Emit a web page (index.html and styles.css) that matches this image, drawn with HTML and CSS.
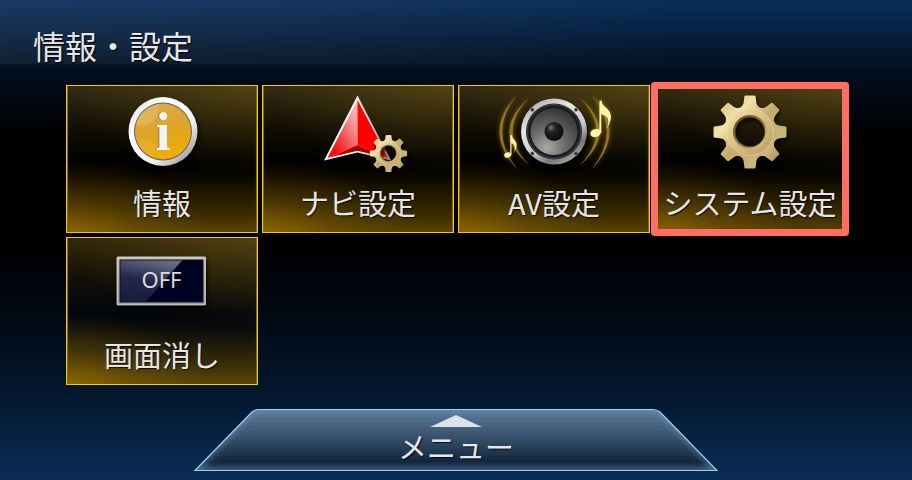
FILE: index.html
```html
<!DOCTYPE html>
<html lang="ja">
<head>
<meta charset="utf-8">
<meta name="viewport" content="width=device-width, initial-scale=1">
<title>情報・設定</title>
<link rel="stylesheet" href="styles.css">
</head>
<body>
<svg class="defs" width="0" height="0" aria-hidden="true">
  <defs>
    <linearGradient id="gold" x1="0" y1="0" x2="1" y2="1">
      <stop offset="0" stop-color="#c9b275"/>
      <stop offset=".3" stop-color="#f3e2a8"/>
      <stop offset=".5" stop-color="#c4aa69"/>
      <stop offset=".75" stop-color="#cdb67c"/>
      <stop offset="1" stop-color="#80683a"/>
    </linearGradient>
    <linearGradient id="face" x1="0" y1="0" x2="1" y2="1">
      <stop offset="0" stop-color="#f3e4ae"/>
      <stop offset=".5" stop-color="#d6c085"/>
      <stop offset="1" stop-color="#b39c60"/>
    </linearGradient>
    <linearGradient id="rim" x1="0" y1="0" x2="1" y2="1">
      <stop offset="0" stop-color="#5b4012"/>
      <stop offset=".5" stop-color="#9a7a38"/>
      <stop offset="1" stop-color="#f3dfa2"/>
    </linearGradient>
    <path id="tooth" d="M-9-22V-25Q-6.800-26.500-6.400-29L-5.600-35.500Q-5.400-36.500-4.500-36.500H4.500Q5.400-36.500 5.600-35.500L6.400-29Q6.800-26.500 9-25V-22Z"/>
    <mask id="gear-shape" maskUnits="userSpaceOnUse" x="-38" y="-38" width="76" height="76">
      <g fill="#fff">
        <circle r="26.500"/>
        <use href="#tooth"/>
        <use href="#tooth" transform="rotate(45)"/>
        <use href="#tooth" transform="rotate(90)"/>
        <use href="#tooth" transform="rotate(135)"/>
        <use href="#tooth" transform="rotate(180)"/>
        <use href="#tooth" transform="rotate(225)"/>
        <use href="#tooth" transform="rotate(270)"/>
        <use href="#tooth" transform="rotate(315)"/>
      </g>
      <circle r="14.500" fill="#000"/>
    </mask>
    <g id="gear">
      <g mask="url(#gear-shape)">
        <rect x="-38" y="-38" width="76" height="76" fill="url(#gold)"/>
        <circle r="23.500" fill="url(#face)"/>
        <circle r="23.500" fill="none" stroke="#f7e9b6" stroke-opacity=".5" stroke-width=".8"/>
        <circle r="17" fill="url(#rim)"/>
        <circle r="15" fill="none" stroke="#6e4d18" stroke-width="1"/>
      </g>
    </g>
  </defs>
</svg>

<header class="header">
  <h1 class="title">情報・設定</h1>
</header>

<main class="tiles">
  <button class="tile" type="button">
    <svg class="icon" viewBox="0 0 120 88" aria-hidden="true">
      <defs>
        <linearGradient id="bezel" x1="0" y1="0" x2="1" y2="1">
          <stop offset="0" stop-color="#d8d8dc"/>
          <stop offset=".3" stop-color="#fff"/>
          <stop offset=".65" stop-color="#f2f2f4"/>
          <stop offset=".85" stop-color="#a9a9b0"/>
          <stop offset="1" stop-color="#ddd"/>
        </linearGradient>
        <linearGradient id="amber" x1=".2" y1="0" x2=".5" y2="1">
          <stop offset="0" stop-color="#d9ac4c"/>
          <stop offset=".55" stop-color="#e0a325"/>
          <stop offset="1" stop-color="#f1ae08"/>
        </linearGradient>
        <clipPath id="disc"><circle cx="61" cy="43.500" r="28"/></clipPath>
      </defs>
      <circle class="shadow" cx="61" cy="43.500" r="34.500" fill="url(#bezel)"/>
      <circle cx="61" cy="43.500" r="29" fill="#66645f"/>
      <circle cx="61" cy="43.500" r="28" fill="url(#amber)"/>
      <path clip-path="url(#disc)" d="M30 35Q41 41 50 34Q57 28 57 12L30 12Z" fill="#fff" fill-opacity=".13"/>
      <path clip-path="url(#disc)" d="M30 50Q48 48 54 58L50 75H30Z" fill="#fff" fill-opacity=".08"/>
      <text class="info-letter info-shade" x="60" y="62">i</text>
      <text class="info-letter" x="61" y="62">i</text>
    </svg>
    <span class="label">情報</span>
  </button>

  <button class="tile" type="button">
    <svg class="icon" viewBox="0 0 120 88" aria-hidden="true">
      <defs>
        <linearGradient id="left-face" x1="1" y1=".25" x2=".35" y2="1">
          <stop offset="0" stop-color="#ffb5b5"/>
          <stop offset=".4" stop-color="#f57678"/>
          <stop offset="1" stop-color="#f00c0c"/>
        </linearGradient>
        <linearGradient id="base-face" x1="0" y1="0" x2="1" y2="0">
          <stop offset="0" stop-color="#f00"/>
          <stop offset=".5" stop-color="#a50000"/>
          <stop offset="1" stop-color="#d00000"/>
        </linearGradient>
        <linearGradient id="arrow-edge" x1="0" y1="0" x2="1" y2="0">
          <stop offset="0" stop-color="#fff"/>
          <stop offset=".5" stop-color="#f4f4f4"/>
          <stop offset="1" stop-color="#8a9297"/>
        </linearGradient>
      </defs>
      <path d="M59.500 7.500L26 72.500L59.500 64.500L93 72.500Z" fill="url(#arrow-edge)"/>
      <path d="M59.500 12L29.500 70L59.500 57Z" fill="url(#left-face)"/>
      <path d="M59.500 12V57L90 70Z" fill="#f00"/>
      <path d="M29.500 70L59.500 57L90 70L59.500 62.800Z" fill="url(#base-face)"/>
      <g class="shadow"><use href="#gear" transform="translate(90.500 65.500) scale(.51)"/></g>
    </svg>
    <span class="label">ナビ設定</span>
  </button>

  <button class="tile" type="button">
    <svg class="icon" viewBox="0 0 120 88" aria-hidden="true">
      <defs>
        <linearGradient id="steel" x1=".2" y1="0" x2=".8" y2="1">
          <stop offset="0" stop-color="#aaa"/>
          <stop offset=".3" stop-color="#e6e6e6"/>
          <stop offset=".6" stop-color="#c9c9ce"/>
          <stop offset=".8" stop-color="#777"/>
          <stop offset="1" stop-color="#bbb"/>
        </linearGradient>
        <radialGradient id="cone" cx=".35" cy=".85" r=".9">
          <stop offset="0" stop-color="#aaaaa4"/>
          <stop offset=".4" stop-color="#6f706d"/>
          <stop offset="1" stop-color="#303030"/>
        </radialGradient>
        <radialGradient id="cap" cx=".35" cy=".3" r=".75">
          <stop offset="0" stop-color="#777"/>
          <stop offset=".3" stop-color="#222"/>
          <stop offset="1" stop-color="#080808"/>
        </radialGradient>
        <g id="waves">
          <path d="M23.500 6.500Q-12.500 43.500 23.500 81.500Q-7 43.500 23.500 6.500Z"/>
          <path d="M35.500 9.500Q-4.500 43.500 35.500 77.500Q2 43.500 35.500 9.500Z"/>
        </g>
      </defs>
      <g class="glow" fill="#967423">
        <use href="#waves"/>
        <use href="#waves" transform="translate(121 0) scale(-1 1)"/>
      </g>
      <circle class="shadow" cx="60" cy="43.500" r="33" fill="url(#steel)"/>
      <circle cx="60" cy="43.500" r="28" fill="#202124"/>
      <circle cx="60" cy="43.500" r="27" fill="none" stroke="#44454a" stroke-width="1"/>
      <circle cx="60" cy="43.500" r="24" fill="url(#cone)"/>
      <circle cx="60" cy="43.500" r="24" fill="none" stroke="#151515" stroke-width="1"/>
      <circle cx="60" cy="43.500" r="9.500" fill="url(#cap)"/>
      <g fill="#222" stroke="#888" stroke-width=".6">
        <circle cx="38.300" cy="21.700" r="1.700"/><circle cx="82" cy="21.700" r="1.700"/>
        <circle cx="38.300" cy="65.500" r="1.700"/><circle cx="82" cy="65.500" r="1.700"/>
      </g>
      <g class="glow" fill="#fff6ae">
        <ellipse cx="101.500" cy="45" rx="5.200" ry="4" transform="rotate(-15 101.500 45)"/>
        <path d="M105.500 12.500H107.500Q108 17 113 20.500Q121 28 112.500 41Q118 29 107.300 26V45H105.300Z"/>
        <ellipse cx="13.700" cy="67" rx="3.500" ry="2.600" transform="rotate(-15 13.700 67)"/>
        <path d="M16.300 47H17.500Q18 50 20.500 52Q25 57 19.800 64.500Q23 57 17.500 55V67H16.300Z"/>
      </g>
    </svg>
    <span class="label">AV設定</span>
  </button>

  <button class="tile tile-selected" type="button">
    <svg class="icon" viewBox="0 0 120 88" aria-hidden="true">
      <g class="shadow"><use href="#gear" transform="translate(60 44)"/></g>
    </svg>
    <span class="label">システム設定</span>
  </button>

  <button class="tile" type="button">
    <svg class="icon" viewBox="0 0 120 88" aria-hidden="true">
      <defs>
        <linearGradient id="frame" x1="0" y1="0" x2="0" y2="1">
          <stop offset="0" stop-color="#c4c2bc"/>
          <stop offset=".5" stop-color="#aeaca8"/>
          <stop offset="1" stop-color="#a3a19c"/>
        </linearGradient>
        <linearGradient id="glass" x1=".6" y1="0" x2=".3" y2="1">
          <stop offset="0" stop-color="#777b92"/>
          <stop offset=".5" stop-color="#2a2e50"/>
          <stop offset="1" stop-color="#1c2042"/>
        </linearGradient>
      </defs>
      <rect class="shadow" x="14.500" y="16.500" width="89.500" height="49" rx="1.500" fill="url(#frame)"/>
      <rect x="15.500" y="17.500" width="87.500" height="47" fill="none" stroke="#dedcd6" stroke-opacity=".5"/>
      <rect x="17.500" y="19.500" width="84" height="43" fill="#11131f"/>
      <rect x="18.500" y="20.500" width="82" height="41" fill="#000222"/>
      <path d="M18.500 20.500H80L44 61.500H18.500Z" fill="url(#glass)" fill-opacity=".85"/>
      <text class="off-letters" x="59.500" y="48">OFF</text>
    </svg>
    <span class="label">画面消し</span>
  </button>
</main>

<footer class="footer">
  <button class="menu" type="button">
    <svg class="menu-shape" viewBox="0 0 524 64" preserveAspectRatio="none" aria-hidden="true">
      <defs>
        <linearGradient id="menu-fill" x1="0" y1="0" x2="0" y2="1">
          <stop offset="0" stop-color="#5c7b9b"/>
          <stop offset=".45" stop-color="#38526d"/>
          <stop offset=".85" stop-color="#11263d"/>
          <stop offset="1" stop-color="#1d3853"/>
        </linearGradient>
        <clipPath id="menu-clip"><path d="M1 62.500L58 4Q61 1.500 65 1.500H459Q463 1.500 466 4L523 62.500Z"/></clipPath>
      </defs>
      <path d="M1 62.500L58 4Q61 1.500 65 1.500H459Q463 1.500 466 4L523 62.500Z" fill="url(#menu-fill)"/>
      <g clip-path="url(#menu-clip)">
        <path class="soft" d="M1 62.500L58 4Q61 1.500 65 1.500H459Q463 1.500 466 4L523 62.500Z" fill="none" stroke="#6f9cc4" stroke-opacity=".7" stroke-width="4"/>
      </g>
      <path d="M1 62.500L58 4Q61 1.500 65 1.500H459Q463 1.500 466 4L523 62.500Z" fill="none" stroke="#a5cdef" stroke-width="1.200"/>
    </svg>
    <svg class="menu-arrow" viewBox="0 0 52 12" aria-hidden="true"><path d="M26 0L52 12H0Z" fill="#dde2e8"/></svg>
    <span class="menu-label">メニュー</span>
  </button>
</footer>
</body>
</html>
```
FILE: styles.css
```css
* {
  box-sizing: border-box;
}

body {
  margin: 0;
  min-height: 100vh;
  display: flex;
  flex-direction: column;
  background: linear-gradient(#0a2e5c 0%, #06203f 7%, #020e1d 15%, #000 28%, #000 52%, #010a15 66%, #04172e 82%, #0a2c56 100%);
  color: #e6e6e8;
  font-family: "Noto Sans CJK JP", sans-serif;
}

button {
  margin: 0;
  padding: 0;
  border: 0;
  background: none;
  color: inherit;
  font: inherit;
  cursor: pointer;
}

.defs {
  position: absolute;
}

.header {
  height: 64px;
  padding: 23px 33px 0;
  background: linear-gradient(90deg, rgba(255, 255, 255, 0.06), rgba(255, 255, 255, 0.04) 35%, rgba(255, 255, 255, 0) 75%);
}

.title {
  margin: 0;
  font-size: 32px;
  line-height: 44px;
  font-weight: 400;
  text-shadow: 1px 1px 1px #000;
}

.tiles {
  display: grid;
  grid-template-columns: repeat(4, 1fr);
  gap: 4px;
  padding: 21px 66px 23px;
}

.tile {
  position: relative;
  display: flex;
  flex-direction: column;
  align-items: center;
  height: 148px;
  padding-top: 2px;
  border: 1px solid #f2cc00;
  background:
    radial-gradient(ellipse 75% 55% at 0% 105%, rgba(180, 130, 0, 0.6), rgba(180, 130, 0, 0.2) 50%, rgba(180, 130, 0, 0) 100%),
    radial-gradient(ellipse 100% 60% at 100% 0%, rgba(130, 103, 25, 0.4), rgba(130, 103, 25, 0) 100%),
    linear-gradient(rgba(72, 56, 14, 0.7), rgba(30, 23, 5, 0.6) 28%, rgba(0, 0, 0, 0.5) 52%, rgba(16, 11, 0, 0.6) 62%, rgba(66, 49, 0, 0.8) 85%, rgba(104, 78, 0, 0.85));
  box-shadow: inset 1px 0 #8a6800, inset -1px 0 #8a6800;
}

.tile-selected::after {
  content: "";
  position: absolute;
  inset: -4px;
  border: 7px solid #ff6e63;
  border-radius: 4px;
  box-shadow: 0 0 1px #ff6e63;
}

.icon {
  width: 120px;
  height: 88px;
  overflow: visible;
}

.shadow {
  filter: drop-shadow(1px 3px 2px rgba(0, 0, 0, 0.8));
}

.glow {
  filter: drop-shadow(0 0 2px rgba(200, 160, 20, 0.6));
}

.info-letter {
  font-family: "Liberation Serif", serif;
  font-size: 54px;
  font-weight: 700;
  text-anchor: middle;
  fill: #f4f4f6;
}

.info-shade {
  fill: #8d7a50;
}

.off-letters {
  font-family: "Noto Sans", sans-serif;
  font-size: 22px;
  text-anchor: middle;
  fill: #d9d9de;
}

.label {
  margin-top: 6px;
  font-size: 29px;
  line-height: 40px;
  white-space: nowrap;
  text-shadow: 1px 1px 1px rgba(0, 0, 0, 0.8);
}

.footer {
  display: flex;
  justify-content: center;
}

.menu {
  position: relative;
  display: flex;
  flex-direction: column;
  align-items: center;
  width: 524px;
  height: 64px;
  padding-top: 7px;
}

.menu-shape {
  position: absolute;
  inset: 0;
  width: 100%;
  height: 100%;
}

.soft {
  filter: blur(3px);
}

.menu-arrow {
  position: relative;
  width: 52px;
  height: 12px;
}

.menu-label {
  position: relative;
  font-size: 29px;
  line-height: 38px;
  text-shadow: 1px 1px 1px rgba(0, 0, 0, 0.8);
}
```
